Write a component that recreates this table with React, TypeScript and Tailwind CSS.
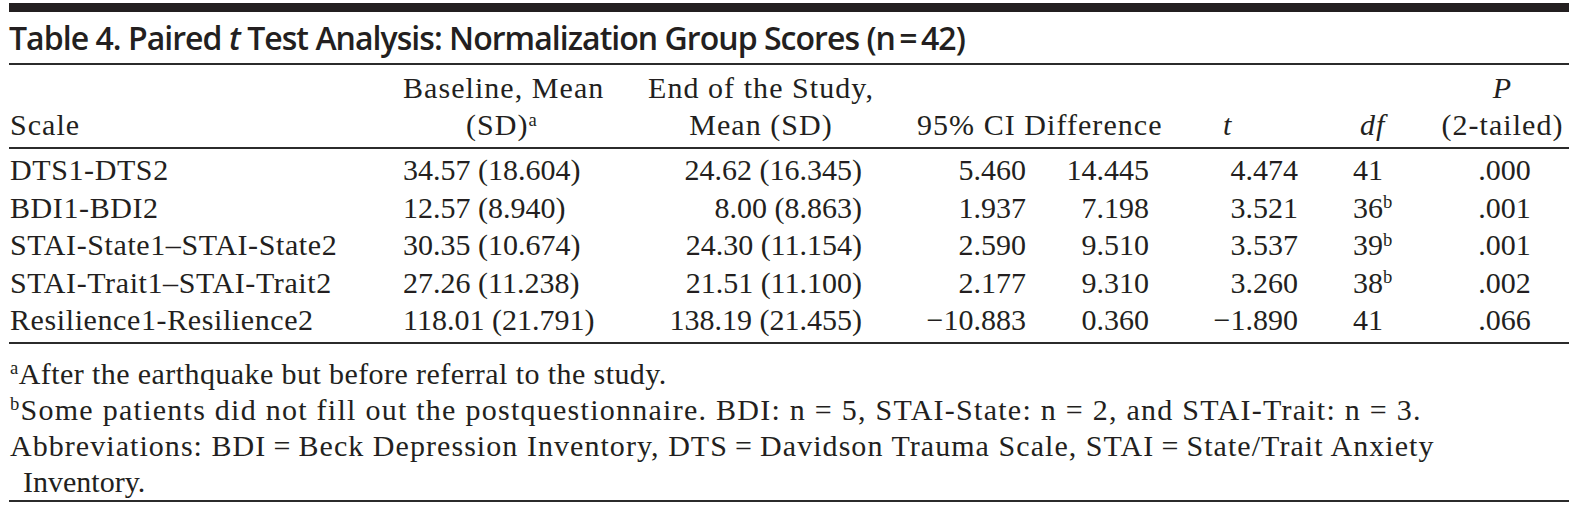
const serif = "font-['Liberation_Serif','Times_New_Roman',serif]";

type Row = {
  scale: string;
  base: string;
  end: string;
  lo: string;
  hi: string;
  t: string;
  df: string;
  sup: boolean;
  p: string;
};

const rows: Row[] = [
  { scale: "DTS1-DTS2", base: "34.57 (18.604)", end: "24.62 (16.345)", lo: "5.460", hi: "14.445", t: "4.474", df: "41", sup: false, p: ".000" },
  { scale: "BDI1-BDI2", base: "12.57 (8.940)", end: "8.00 (8.863)", lo: "1.937", hi: "7.198", t: "3.521", df: "36", sup: true, p: ".001" },
  { scale: "STAI-State1\u2013STAI-State2", base: "30.35 (10.674)", end: "24.30 (11.154)", lo: "2.590", hi: "9.510", t: "3.537", df: "39", sup: true, p: ".001" },
  { scale: "STAI-Trait1\u2013STAI-Trait2", base: "27.26 (11.238)", end: "21.51 (11.100)", lo: "2.177", hi: "9.310", t: "3.260", df: "38", sup: true, p: ".002" },
  { scale: "Resilience1-Resilience2", base: "118.01 (21.791)", end: "138.19 (21.455)", lo: "\u221210.883", hi: "0.360", t: "\u22121.890", df: "41", sup: false, p: ".066" },
];

function Sup({ children }: { children: string }) {
  return <span className="relative -top-[0.5em] text-[0.62em] leading-none">{children}</span>;
}

export default function App() {
  return (
    <div className="min-h-[508px] w-[1580px] bg-white pl-[9px] pr-[11px] pt-[3px] text-[#231f20]">
      <div className="h-[9px] bg-[#231f20]" />

      <h1 className="border-b-2 border-[#2b2b2b] pb-[5px] pt-[6px] font-['Open_Sans',sans-serif] text-[32px] font-semibold leading-[40px] tracking-[-0.03em]">
        Table 4. Paired <i>t</i> Test Analysis: Normalization Group Scores (n{"\u2009"}={"\u2009"}42)
      </h1>

      <div className={`${serif} text-[30px]`}>
        {/* header */}
        <div className="grid grid-cols-[394px_198px_273px_166px_123px_177px_90px_139px] items-end border-b-2 border-[#2b2b2b] pb-[4px] pt-[4px] leading-[37px] tracking-[0.035em]">
          <div className="pl-[1px]">Scale</div>
          <div className="whitespace-nowrap text-center">
            Baseline, Mean
            <br />
            (SD)<Sup>a</Sup>
          </div>
          <div className="whitespace-nowrap pl-[47px] text-center">
            End of the Study,
            <br />
            Mean (SD)
          </div>
          <div className="col-span-2 whitespace-nowrap pl-[43px]">95% CI Difference</div>
          <div className="pl-[60px] italic">t</div>
          <div className="pl-[20px] italic">df</div>
          <div className="whitespace-nowrap pl-[6px] text-center">
            <i>P</i>
            <br />
            (2-tailed)
          </div>
        </div>

        {/* body */}
        <div className="border-b-2 border-[#2b2b2b] pb-[3px] pt-[2px] leading-[37.5px]">
          {rows.map((r) => (
            <div
              key={r.scale}
              className="grid grid-cols-[394px_198px_273px_166px_123px_177px_90px_139px] whitespace-nowrap"
            >
              <div className="pl-[1px] tracking-[0.02em]">{r.scale}</div>
              <div>{r.base}</div>
              <div className="pr-[12px] text-right">{r.end}</div>
              <div className="pr-[14px] text-right">{r.lo}</div>
              <div className="pr-[14px] text-right">{r.hi}</div>
              <div className="pr-[42px] text-right">{r.t}</div>
              <div className="pl-[13px]">
                {r.df}
                {r.sup && <Sup>b</Sup>}
              </div>
              <div className="pl-[10px] text-center">{r.p}</div>
            </div>
          ))}
        </div>

        {/* footnotes */}
        <div className="border-b-2 border-[#2b2b2b] pb-0 pt-[12px] leading-[36px]">
          <p className="pl-[1px] tracking-[0.014em]">
            <Sup>a</Sup>After the earthquake but before referral to the study.
          </p>
          <p className="pl-[1px] tracking-[0.042em]">
            <Sup>b</Sup>Some patients did not fill out the postquestionnaire. BDI: n = 5, STAI-State: n = 2, and STAI-Trait: n = 3.
          </p>
          <p className="pl-[1px] tracking-[0.035em]">
            Abbreviations: BDI{"\u2009"}={"\u2009"}Beck Depression Inventory, DTS{"\u2009"}={"\u2009"}Davidson Trauma Scale, STAI{"\u2009"}={"\u2009"}State/Trait Anxiety
          </p>
          <p className="pl-[14px]">Inventory.</p>
        </div>
      </div>
    </div>
  );
}
